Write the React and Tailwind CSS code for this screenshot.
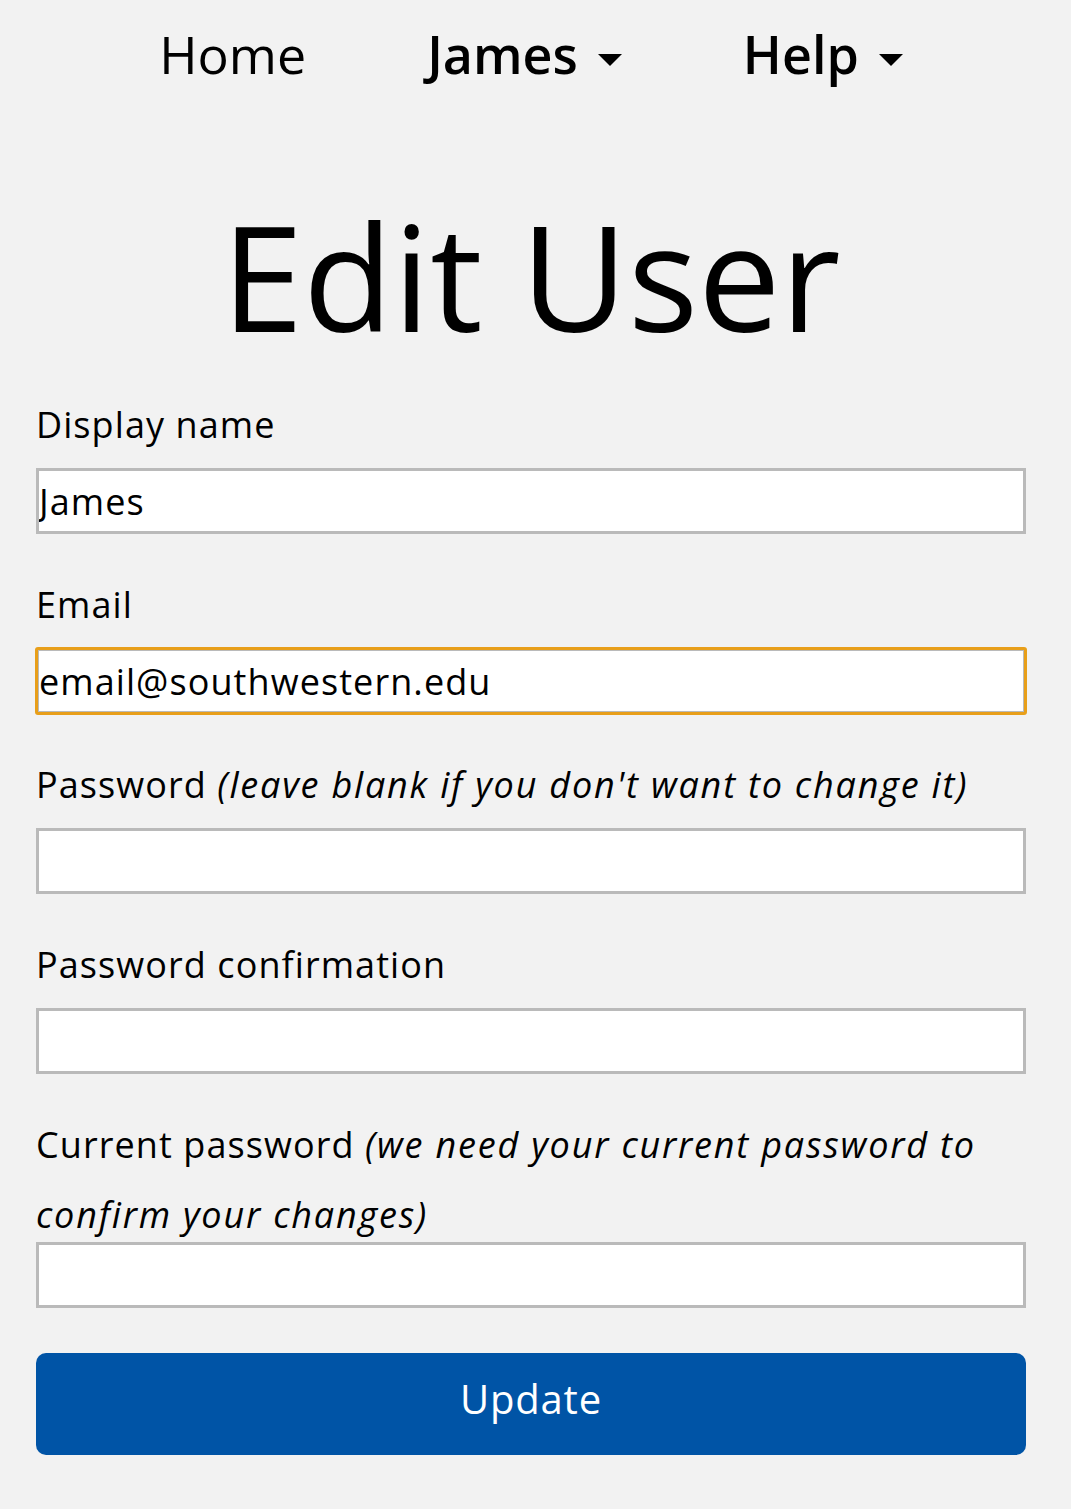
import React from 'react';

const Caret = () => (
  <svg width="24" height="12" viewBox="0 0 24 12" className="ml-[20px] mt-[11px]">
    <path d="M0 0 L24 0 L12 12 Z" fill="#000" />
  </svg>
);

const Field = ({ label, note, value = '', type = 'text', focused = false }) => (
  <div className="mb-[36px]">
    <label className="block text-[36px] leading-[70px] tracking-[0.03em] mb-[8px]">
      {label}
      {note && (
        <>
          {' '}
          <em className="italic tracking-[0.05em]">{note}</em>
        </>
      )}
    </label>
    <input
      type={type}
      defaultValue={value}
      className={`block w-full h-[66px] bg-white border-[3px] border-[#bababa] px-0 text-[36px] tracking-[0.03em] text-black ${
        focused ? 'outline-[3px] outline-solid outline-[#e89f1a] outline-offset-[-2px] rounded-[2px]' : 'outline-none'
      }`}
    />
  </div>
);

export default function App() {
  return (
    <div
      className="min-h-[1509px] bg-[#f2f2f2] text-black pl-[36px] pr-[45px]"
      style={{ fontFamily: '"Open Sans", "Noto Sans", sans-serif' }}
    >
      <nav className="flex justify-center items-center gap-[121px] pt-[28px] text-[52px] leading-[52px]">
        <a className="font-normal">Home</a>
        <a className="flex items-center font-semibold">
          James
          <Caret />
        </a>
        <a className="flex items-center font-semibold">
          Help
          <Caret />
        </a>
      </nav>

      <h1 className="text-center text-[147px] leading-[147px] font-normal mt-[122px] mb-[41px]">Edit User</h1>

      <form onSubmit={(e) => e.preventDefault()}>
        <Field label="Display name" value="James" />
        <Field label="Email" value="email@southwestern.edu" type="email" focused />
        <Field label="Password" note="(leave blank if you don't want to change it)" type="password" />
        <Field label="Password confirmation" type="password" />
        <div className="mb-[45px]">
          <label className="block text-[36px] leading-[70px] tracking-[0.03em] mb-[-8px]">
            Current password{' '}
            <em className="italic tracking-[0.05em]">
              (we need your current password to
              <br />
              confirm your changes)
            </em>
          </label>
          <input
            type="password"
            className="block w-full h-[66px] bg-white border-[3px] border-[#bababa] outline-none text-[36px]"
          />
        </div>
        <button
          type="submit"
          className="block w-full h-[102px] pb-[10px] rounded-[10px] bg-[#0054a6] text-white text-[40px] tracking-[0.02em]"
        >
          Update
        </button>
      </form>
    </div>
  );
}
